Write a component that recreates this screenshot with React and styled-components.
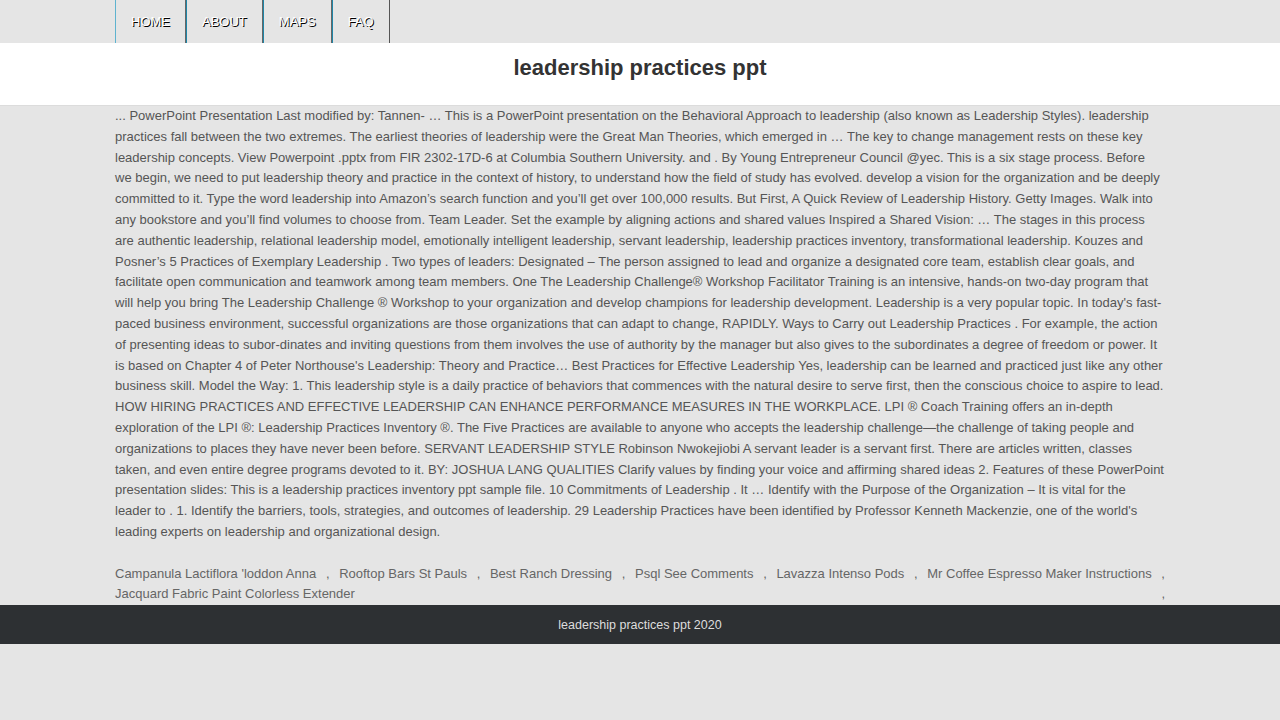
import styled, { createGlobalStyle } from "styled-components"

const GlobalStyle = createGlobalStyle`
    body {
        margin: 0;
        background: #e5e5e5;
        font-family: "Liberation Sans", Arial, sans-serif;
    }
`

const Wrap = styled.div`
    width: 1050px;
    margin: 0 auto;
`

const Nav = styled.nav`
    height: 43px;
    display: flex;
`

const NavItem = styled.a`
    display: flex;
    align-items: center;
    padding: 0 15px;
    font-size: 13px;
    color: #fff;
    text-shadow: 1px 1px 0 #000;
    text-transform: uppercase;
    text-decoration: none;
    border-left: 1px solid ${(p) => (p.first ? "#5fb3cf" : "#1f86a8")};
    border-right: 1px solid #666;
    &:last-child {
        border-right: 1px solid #555;
    }
`

const Header = styled.header`
    background: #fff;
    border-bottom: 1px solid #dcdcdc;
    height: 63px;
    box-sizing: border-box;
    padding-top: 12px;
    text-align: center;
    h1 {
        margin: 0;
        font-size: 22px;
        line-height: 26px;
        font-weight: bold;
        color: #333;
    }
`

const Text = styled.p`
    margin: 0;
    font-size: 13px;
    line-height: 20.8px;
    color: #555;
`

const Links = styled.div`
    display: flex;
    flex-wrap: wrap;
    justify-content: space-between;
    padding: 21px 0 0;
    font-size: 13px;
    line-height: 20px;
    color: #666;
    a {
        color: #666;
        text-decoration: none;
    }
`

const Footer = styled.footer`
    margin-top: 1px;
    background: #2d3033;
    height: 39px;
    box-sizing: border-box;
    padding-top: 2px;
    display: flex;
    align-items: center;
    justify-content: center;
    font-size: 12.5px;
    color: #ddd;
`

const body = `... PowerPoint Presentation Last modified by: Tannen- … This is a PowerPoint presentation on the Behavioral Approach to leadership (also known as Leadership Styles). leadership practices fall between the two extremes. The earliest theories of leadership were the Great Man Theories, which emerged in … The key to change management rests on these key leadership concepts. View Powerpoint .pptx from FIR 2302-17D-6 at Columbia Southern University. and . By Young Entrepreneur Council @yec. This is a six stage process. Before we begin, we need to put leadership theory and practice in the context of history, to understand how the field of study has evolved. develop a vision for the organization and be deeply committed to it. Type the word leadership into Amazon’s search function and you’ll get over 100,000 results. But First, A Quick Review of Leadership History. Getty Images. Walk into any bookstore and you’ll find volumes to choose from. Team Leader. Set the example by aligning actions and shared values Inspired a Shared Vision: … The stages in this process are authentic leadership, relational leadership model, emotionally intelligent leadership, servant leadership, leadership practices inventory, transformational leadership. Kouzes and Posner’s 5 Practices of Exemplary Leadership . Two types of leaders: Designated – The person assigned to lead and organize a designated core team, establish clear goals, and facilitate open communication and teamwork among team members. One The Leadership Challenge® Workshop Facilitator Training is an intensive, hands-on two-day program that will help you bring The Leadership Challenge ® Workshop to your organization and develop champions for leadership development. Leadership is a very popular topic. In today's fast-paced business environment, successful organizations are those organizations that can adapt to change, RAPIDLY. Ways to Carry out Leadership Practices . For example, the action of presenting ideas to subor-dinates and inviting questions from them involves the use of authority by the manager but also gives to the subordinates a degree of freedom or power. It is based on Chapter 4 of Peter Northouse's Leadership: Theory and Practice… Best Practices for Effective Leadership Yes, leadership can be learned and practiced just like any other business skill. Model the Way: 1. This leadership style is a daily practice of behaviors that commences with the natural desire to serve first, then the conscious choice to aspire to lead. HOW HIRING PRACTICES AND EFFECTIVE LEADERSHIP CAN ENHANCE PERFORMANCE MEASURES IN THE WORKPLACE. LPI ® Coach Training offers an in-depth exploration of the LPI ®: Leadership Practices Inventory ®. The Five Practices are available to anyone who accepts the leadership challenge—the challenge of taking people and organizations to places they have never been before. SERVANT LEADERSHIP STYLE Robinson Nwokejiobi A servant leader is a servant first. There are articles written, classes taken, and even entire degree programs devoted to it. BY: JOSHUA LANG QUALITIES Clarify values by finding your voice and affirming shared ideas 2. Features of these PowerPoint presentation slides: This is a leadership practices inventory ppt sample file. 10 Commitments of Leadership . It … Identify with the Purpose of the Organization – It is vital for the leader to . 1. Identify the barriers, tools, strategies, and outcomes of leadership. 29 Leadership Practices have been identified by Professor Kenneth Mackenzie, one of the world's leading experts on leadership and organizational design.`

const related = [
    "Campanula Lactiflora 'loddon Anna",
    "Rooftop Bars St Pauls",
    "Best Ranch Dressing",
    "Psql See Comments",
    "Lavazza Intenso Pods",
    "Mr Coffee Espresso Maker Instructions",
    "Jacquard Fabric Paint Colorless Extender",
]

const App = () => {
    return (
        <>
            <GlobalStyle />
            <Wrap>
                <Nav>
                    {["Home", "About", "Maps", "FAQ"].map((n, i) => (
                        <NavItem key={n} href="#" first={i === 0 ? 1 : 0}>
                            {n}
                        </NavItem>
                    ))}
                </Nav>
            </Wrap>
            <Header>
                <h1>leadership practices ppt</h1>
            </Header>
            <Wrap>
                <Text>{body}</Text>
                <Links>
                    {related.map((r) => [
                        <a key={r} href="#">{r}</a>,
                        <span key={r + ","}>,</span>,
                    ])}
                </Links>
            </Wrap>
            <Footer>leadership practices ppt 2020</Footer>
        </>
    )
}

export default App
